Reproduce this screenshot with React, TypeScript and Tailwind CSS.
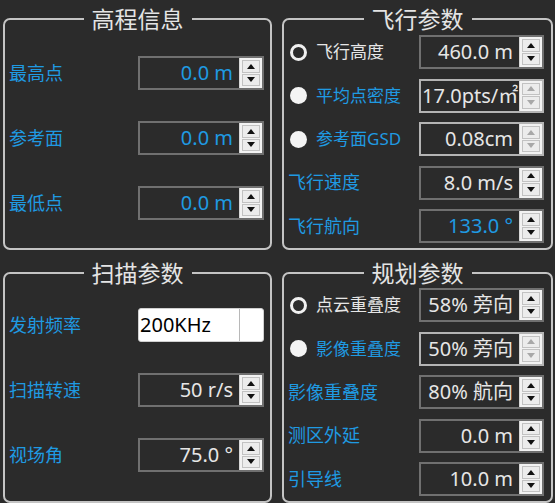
import type { ReactNode } from "react";

const BLUE = "text-[#1f9ae2]";
const WHITE = "text-[#e6e6e6]";

function Arrow({ up, disabled }: { up?: boolean; disabled?: boolean }) {
    return (
        <div className="flex-1 flex items-center justify-center border border-[#c2c2c2] bg-[#ececec]">
            <svg width="8" height="5" viewBox="0 0 8 5">
                <polygon
                    points={up ? "0,5 8,5 4,0" : "0,0 8,0 4,5"}
                    fill={disabled ? "#a8a8a8" : "#111"}
                />
            </svg>
        </div>
    );
}

function SpinBox({
    value,
    blue,
    disabled,
    left,
    width = "w-[126px]",
}: {
    value: string;
    blue?: boolean;
    disabled?: boolean;
    left?: boolean;
    width?: string;
}) {
    return (
        <div
            className={`${width} h-[34px] flex border-2 ${
                disabled ? "border-[#b4b4b4]" : "border-[#707070]"
            } bg-[#2b2b2b]`}
        >
            <div
                className={`flex-1 min-w-0 overflow-hidden whitespace-nowrap flex items-center text-[20px] ${
                    left ? "justify-start pl-[1px]" : "justify-end pr-[6px]"
                } ${blue ? BLUE : WHITE}`}
            >
                {value}
            </div>
            <div className="w-[23px] flex flex-col gap-[1px] p-[2px] bg-[#f2f2f2] border-l border-[#d6d6d6]">
                <Arrow up disabled={disabled} />
                <Arrow disabled={disabled} />
            </div>
        </div>
    );
}

function Combo({ value }: { value: string }) {
    return (
        <div className="w-[126px] h-[34px] flex bg-white rounded-[3px] border border-[#d0d0d0]">
            <div className="flex-1 flex items-center text-[20px] text-black pl-[1px]">{value}</div>
            <div className="w-[24px] border-l border-[#b8b8b8]" />
        </div>
    );
}

function Radio({ checked }: { checked?: boolean }) {
    return checked ? (
        <span className="w-[17px] h-[17px] rounded-full border-[3px] border-[#f0f0f0] shrink-0" />
    ) : (
        <span className="w-[17px] h-[17px] rounded-full bg-[#f4f4f4] shrink-0" />
    );
}

function Panel({ title, children }: { title: string; children: ReactNode }) {
    return (
        <fieldset className="border-2 border-[#c4c4c4] rounded-[7px] min-w-0">
            <legend className="mx-auto px-[8px] text-[23px] leading-[30px] text-[#e4e4e4]">{title}</legend>
            {children}
        </fieldset>
    );
}

function Row({ label, children, radio }: { label: string; children: ReactNode; radio?: ReactNode }) {
    return (
        <div className="h-[34px] flex items-center justify-between">
            {radio ?? <span className={`text-[18px] ${BLUE}`}>{label}</span>}
            {children}
        </div>
    );
}

function RadioLabel({ label, checked }: { label: string; checked?: boolean }) {
    return (
        <span className="flex items-center gap-[9px] pl-[2px]">
            <Radio checked={checked} />
            <span className={`text-[17px] ${checked ? WHITE : BLUE}`}>{label}</span>
        </span>
    );
}

export default function App() {
    return (
        <div
            className="w-[555px] h-[503px] bg-[#2b2b2b] grid grid-cols-[269px_271px] grid-rows-[246px_245px] gap-x-[10px] gap-y-[8px] pl-[3px] pt-[4px]"
            style={{ fontFamily: '"Noto Sans", "Noto Sans CJK SC", sans-serif' }}
        >
            {/* 高程信息 */}
            <Panel title="高程信息">
                <div className="flex flex-col gap-[31px] pt-[22px] pl-[4px] pr-[6px]">
                    <Row label="最高点">
                        <SpinBox value="0.0 m" blue />
                    </Row>
                    <Row label="参考面">
                        <SpinBox value="0.0 m" blue />
                    </Row>
                    <Row label="最低点">
                        <SpinBox value="0.0 m" blue />
                    </Row>
                </div>
            </Panel>

            {/* 飞行参数 */}
            <Panel title="飞行参数">
                <div className="flex flex-col gap-[9.5px] pt-[1px] pl-[4px] pr-[7px]">
                    <Row label="飞行高度" radio={<RadioLabel label="飞行高度" checked />}>
                        <SpinBox value="460.0 m" width="w-[125px]" />
                    </Row>
                    <Row label="平均点密度" radio={<RadioLabel label="平均点密度" />}>
                        <SpinBox value="17.0pts/㎡" width="w-[125px]" disabled left />
                    </Row>
                    <Row label="参考面GSD" radio={<RadioLabel label="参考面GSD" />}>
                        <SpinBox value="0.08cm" width="w-[125px]" disabled />
                    </Row>
                    <Row label="飞行速度">
                        <SpinBox value="8.0 m/s" width="w-[125px]" />
                    </Row>
                    <Row label="飞行航向">
                        <SpinBox value="133.0 °" width="w-[125px]" blue />
                    </Row>
                </div>
            </Panel>

            {/* 扫描参数 */}
            <Panel title="扫描参数">
                <div className="flex flex-col gap-[31px] pt-[20px] pl-[4px] pr-[6px]">
                    <Row label="发射频率">
                        <Combo value="200KHz" />
                    </Row>
                    <Row label="扫描转速">
                        <SpinBox value="50 r/s" />
                    </Row>
                    <Row label="视场角">
                        <SpinBox value="75.0 °" />
                    </Row>
                </div>
            </Panel>

            {/* 规划参数 */}
            <Panel title="规划参数">
                <div className="flex flex-col gap-[9.5px] pl-[4px] pr-[7px]">
                    <Row label="点云重叠度" radio={<RadioLabel label="点云重叠度" checked />}>
                        <SpinBox value="58% 旁向" width="w-[125px]" />
                    </Row>
                    <Row label="影像重叠度" radio={<RadioLabel label="影像重叠度" />}>
                        <SpinBox value="50% 旁向" width="w-[125px]" disabled />
                    </Row>
                    <Row label="影像重叠度">
                        <SpinBox value="80% 航向" width="w-[125px]" />
                    </Row>
                    <Row label="测区外延">
                        <SpinBox value="0.0 m" width="w-[125px]" />
                    </Row>
                    <Row label="引导线">
                        <SpinBox value="10.0 m" width="w-[125px]" />
                    </Row>
                </div>
            </Panel>
        </div>
    );
}
